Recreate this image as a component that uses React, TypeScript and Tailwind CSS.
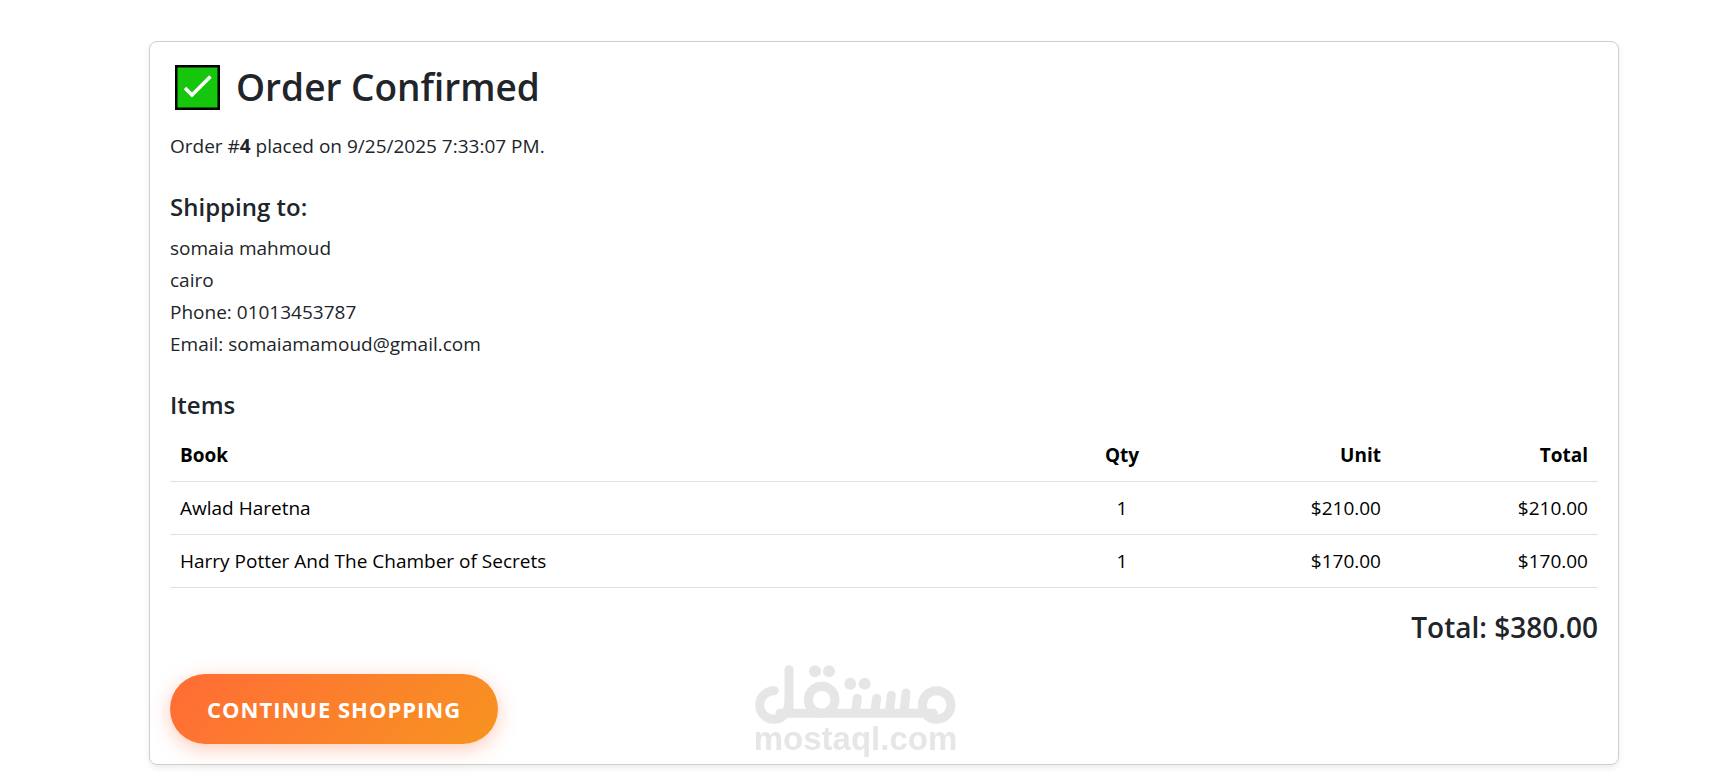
interface OrderItem {
  id: number;
  title: string;
  qty: number;
  unit: number;
}

interface Order {
  id: number;
  placedAt: string;
  name: string;
  city: string;
  phone: string;
  email: string;
  items: OrderItem[];
}

const order: Order = {
  id: 4,
  placedAt: "9/25/2025 7:33:07 PM",
  name: "somaia mahmoud",
  city: "cairo",
  phone: "01013453787",
  email: "somaiamamoud@gmail.com",
  items: [
    { id: 1, title: "Awlad Haretna", qty: 1, unit: 210 },
    { id: 2, title: "Harry Potter And The Chamber of Secrets", qty: 1, unit: 170 },
  ],
};

const money = (value: number) => `$${value.toFixed(2)}`;

function CheckBadge() {
  return (
    <svg className="w-[45px] h-[45px] shrink-0" viewBox="0 0 45 45" aria-hidden="true">
      <rect x="1.25" y="1.25" width="42.5" height="42.5" fill="#16c60c" stroke="#000" strokeWidth="2.5" />
      <path d="M10 23 L17 30 L35.5 11.5" fill="none" stroke="#fff" strokeWidth="3.6" />
    </svg>
  );
}

function ItemsTable({ items }: { items: OrderItem[] }) {
  return (
    <table className="w-full table-fixed border-collapse text-black">
      <thead>
        <tr className="border-b border-[#dee2e6]">
          <th className="p-2.5 text-left font-bold">Book</th>
          <th className="w-[138px] p-2.5 text-center font-bold">Qty</th>
          <th className="w-[200px] p-2.5 text-right font-bold">Unit</th>
          <th className="w-[207px] p-2.5 text-right font-bold">Total</th>
        </tr>
      </thead>
      <tbody>
        {items.map((item) => (
          <tr key={item.id} className="border-b border-[#dee2e6]">
            <td className="p-2.5">{item.title}</td>
            <td className="p-2.5 text-center">{item.qty}</td>
            <td className="p-2.5 text-right">{money(item.unit)}</td>
            <td className="p-2.5 text-right">{money(item.unit * item.qty)}</td>
          </tr>
        ))}
      </tbody>
    </table>
  );
}

function Watermark() {
  return (
    <div className="pointer-events-none fixed inset-x-0 bottom-5 flex flex-col items-center">
      <svg className="w-[201px] h-[60px]" viewBox="75 45 603 180" role="img" aria-label="mostaql logo">
        <g fill="none" stroke="#e6e6e6" strokeWidth="27" strokeLinecap="round">
          <circle cx="620" cy="165" r="43" />
          <circle cx="275" cy="149" r="40" />
          <circle cx="132" cy="165" r="43" pathLength="4" strokeDasharray="3 1" />
          <line x1="150" y1="190" x2="610" y2="190" />
          <line x1="177" y1="59" x2="177" y2="180" />
          <line x1="382" y1="145" x2="376" y2="188" />
          <line x1="440" y1="145" x2="434" y2="188" />
          <line x1="484" y1="136" x2="478" y2="188" />
          <line x1="528" y1="129" x2="522" y2="188" />
        </g>
        <g fill="#e6e6e6">
          <circle cx="255" cy="64" r="18" />
          <circle cx="297" cy="64" r="18" />
          <circle cx="361" cy="101" r="18" />
          <circle cx="404" cy="101" r="18" />
        </g>
      </svg>
      <span className="font-['Liberation_Sans',sans-serif] text-[33px] leading-7 font-bold text-[#e6e6e6]">
        mostaql.com
      </span>
    </div>
  );
}

export default function App() {
  const total = order.items.reduce((sum, item) => sum + item.unit * item.qty, 0);

  return (
    <main className="min-h-screen bg-white pt-[41px] pr-[92px] pb-2 pl-[149px] font-['Open_Sans',sans-serif] text-[19px] leading-8 text-[#212529]">
      <section className="rounded-lg border border-[#cfcfcf] bg-white p-5 shadow-[0_3px_6px_rgba(0,0,0,0.08)]">
        <h2 className="mb-[18px] flex items-center gap-4 pl-[5px] text-[37px] leading-[50px] font-semibold">
          <CheckBadge />
          Order Confirmed
        </h2>
        <p>
          Order #<strong>{order.id}</strong> placed on {order.placedAt}.
        </p>

        {/* Shipping */}
        <h5 className="mt-[30px] mb-2.5 text-2xl leading-[30px] font-semibold">Shipping to:</h5>
        <address className="not-italic">
          <p>{order.name}</p>
          <p>{order.city}</p>
          <p>Phone: {order.phone}</p>
          <p>Email: {order.email}</p>
        </address>

        {/* Items */}
        <h5 className="mt-[30px] mb-[9px] text-2xl leading-[30px] font-semibold">Items</h5>
        <ItemsTable items={order.items} />

        <h4 className="mt-5 mb-7 text-right text-[28px] leading-[38px] font-semibold">Total: {money(total)}</h4>

        <button
          type="button"
          className="block h-[70px] rounded-full bg-linear-135 from-[#ff6b35] to-[#f7931e] px-[37px] text-[22px] font-bold tracking-[1px] text-white uppercase shadow-[0_5px_19px_rgba(255,107,53,0.35)]"
        >
          Continue Shopping
        </button>
      </section>
      <Watermark />
    </main>
  );
}
